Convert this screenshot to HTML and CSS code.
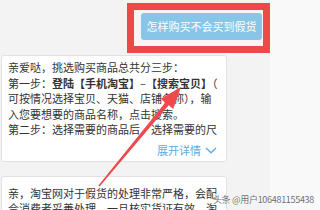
FILE: index.html
```html
<!DOCTYPE html>
<html lang="zh-CN">
<head>
<meta charset="utf-8">
<link rel="stylesheet" href="styles.css">
</head>
<body>
<div class="screen">
  <div class="chat">
    <div class="q-row">
      <div class="mark">
        <div class="q-btn">怎样购买不会买到假货</div>
      </div>
    </div>
    <div class="card card-first">
      <div class="line">亲爱哒，挑选购买商品总共分三步：</div>
      <div class="line">第一步：<b>登陆【手机淘宝】</b>–<b>【搜索宝贝】</b>（</div>
      <div class="line">可按情况选择宝贝、天猫、店铺名称），输</div>
      <div class="line">入您要想要的商品名称，点击搜索。</div>
      <div class="line">第二步：选择需要的商品后，选择需要的尺</div>
      <div class="more">展开详情<svg class="chev" width="12" height="7" viewBox="0 0 12 7"><path d="M1 1 L6 5.8 L11 1" fill="none" stroke="#5aaee3" stroke-width="1.3"/></svg></div>
    </div>
    <div class="card card-second">
      <div class="line">亲，淘宝网对于假货的处理非常严格，会配</div>
      <div class="line">合消费者妥善处理，一旦核实货证有效，淘</div>
    </div>
  </div>
  <div class="side"></div>
</div>
<svg class="arrow" width="320" height="210" viewBox="0 0 320 210">
  <polygon fill="#ee4a4d" points="98.4,185.5 99.6,186.5 168.7,105.3 173.2,109 181,87 160.8,98.8 165.3,102.5"/>
</svg>
<div class="watermark">头条 @用户106481155438</div>
</body>
</html>
```

FILE: styles.css
```css
* { box-sizing: border-box; }
html, body {
  margin: 0;
  padding: 0;
  width: 320px;
  height: 210px;
  overflow: hidden;
}
body {
  font-family: "Noto Sans CJK SC", "Noto Sans", sans-serif;
  color: #333;
  background: #f3f3f3;
  position: relative;
}
.screen {
  display: flex;
  height: 210px;
}
.chat {
  width: 270px;
  background: #f3f3f3;
  padding-left: 1px;
  display: flex;
  flex-direction: column;
}
.side {
  flex: 1;
  background: #f9f9f9;
}
.q-row {
  padding-top: 3px;
  display: flex;
}
.mark {
  margin-left: 126px;
  border: 7px solid #ef4848;
  padding: 3px 1px 6px 7px;
  background: #f7f5f5;
}
.q-btn {
  width: 121px;
  height: 27px;
  line-height: 27px;
  background: #88c5e7;
  color: #fff;
  font-size: 11px;
  text-align: center;
  border-radius: 3px;
  white-space: nowrap;
}
.card {
  width: 226px;
  background: #fff;
  border: 1px solid #e2e2e2;
  border-radius: 3px;
  padding: 4px 8px 3px 6px;
}
.card-first {
  margin-top: 2px;
}
.card-second {
  margin-top: 14px;
  padding-top: 9px;
}
.line {
  font-size: 11px;
  line-height: 15.5px;
  white-space: nowrap;
}
.line b {
  font-weight: 700;
}
.more {
  margin-top: 5px;
  font-size: 11px;
  line-height: 15px;
  color: #58ace4;
  display: flex;
  justify-content: flex-end;
  align-items: center;
  gap: 4px;
  padding-right: 1px;
}
.chev {
  display: block;
}
.arrow {
  position: absolute;
  left: 0;
  top: 0;
  pointer-events: none;
}
.watermark {
  position: absolute;
  right: 6px;
  top: 194px;
  font-family: "Noto Sans CJK SC", "Liberation Sans", sans-serif;
  font-size: 9px;
  line-height: 12px;
  letter-spacing: -0.3px;
  color: #6f6f6f;
  text-shadow: 0 0 2px #fff, 0 0 1px #fff;
  white-space: nowrap;
}
```
